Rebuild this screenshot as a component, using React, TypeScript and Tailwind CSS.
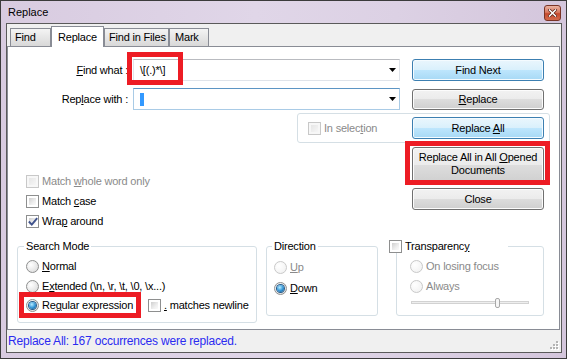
import React from "react";

const FONT = "font-['Liberation_Sans',Arial,sans-serif]";

function Check({ checked = false, disabled = false }: { checked?: boolean; disabled?: boolean }) {
  return (
    <span
      className={`relative flex w-[13px] h-[13px] shrink-0 items-center justify-center border p-[2px] ${
        disabled ? "border-[#c8c8c8] bg-[#f7f7f7]" : "border-[#8e8f8f] bg-white"
      }`}
    >
      <span
        className={`block w-full h-full ${
          disabled
            ? "bg-[linear-gradient(135deg,#e6e6e6,#f6f6f6)]"
            : "bg-[linear-gradient(135deg,#cfcfcf,#eeeeee_60%,#fbfbfb)]"
        }`}
      />
      {checked && (
        <svg className="absolute left-[1px] top-[1px]" width="10" height="10" viewBox="0 0 10 10">
          <path d="M1.5 5.2 L3.8 7.6 L8.6 1.8" fill="none" stroke="#3f528c" strokeWidth="1.9" strokeLinecap="square" />
        </svg>
      )}
    </span>
  );
}

function Radio({ checked = false, disabled = false }: { checked?: boolean; disabled?: boolean }) {
  return (
    <span
      className={`flex w-[13px] h-[13px] shrink-0 items-center justify-center rounded-full border ${
        disabled
          ? "border-[#c9c9c9] bg-[radial-gradient(circle_at_35%_35%,#ffffff,#efefef)]"
          : "border-[#8e8f8f] bg-[radial-gradient(circle_at_35%_35%,#ffffff,#d6d6d6)]"
      }`}
    >
      {checked && (
        <span className="block w-[7px] h-[7px] rounded-full bg-[radial-gradient(circle_at_40%_35%,#b8ecff,#2f93d6_55%,#0c4778)] shadow-[0_0_0_1px_#245a8a]" />
      )}
    </span>
  );
}

function Btn({
  children,
  blue = false,
  className = "",
}: {
  children: React.ReactNode;
  blue?: boolean;
  className?: string;
}) {
  return (
    <div
      className={`flex w-[132px] shrink-0 items-center justify-center rounded-[3px] border text-black ${
        blue
          ? "border-[#3c7fb1] bg-[linear-gradient(#eaf6fd,#d9f0fc_50%,#bee6fd_50%,#a7d9f5)] shadow-[inset_0_0_0_1px_#f4fbff]"
          : "border-[#707070] bg-[linear-gradient(#f2f2f2,#ebebeb_50%,#dddddd_50%,#cfcfcf)] shadow-[inset_0_0_0_1px_#fcfcfc]"
      } ${className}`}
    >
      {children}
    </div>
  );
}

function Combo({ children, focused = false }: { children?: React.ReactNode; focused?: boolean }) {
  return (
    <div
      className={`ml-[5px] flex h-[22px] w-[267px] items-center border bg-white ${
        focused
          ? "border-[#a9cbe6] border-t-[#5d95c4]"
          : "border-[#e0e4ea] border-t-[#b9bbc0]"
      }`}
    >
      <div className="flex flex-1 items-center pl-[6px]">{children}</div>
      <svg className="mr-[3px]" width="7" height="4" viewBox="0 0 7 4">
        <polygon points="0,0 7,0 3.5,4" fill="#000" />
      </svg>
    </div>
  );
}

const U = ({ children }: { children: React.ReactNode }) => <span className="underline underline-offset-[1px]">{children}</span>;

export default function App() {
  return (
    <div
      className={`relative h-[359px] w-[567px] overflow-hidden border border-[#3b3b3b] bg-[linear-gradient(90deg,#d8cbe0,#e0d6e8_45%,#dcd1e4_70%,#d4c6dc)] text-[11px] tracking-[-0.2px] text-black ${FONT}`}
    >
      {/* title bar */}
      <div className="flex h-[22px] items-center pl-[7px] pr-[5px]">
        <span className="text-[11px] tracking-normal text-black">Replace</span>
        <div className="ml-auto flex h-[16px] w-[17px] items-center justify-center self-start mt-[4px] rounded-[3px] border border-[#7a3426] bg-[linear-gradient(#eab3a2,#d9785f_45%,#c64a2e_55%,#d46a4c)]">
          <svg width="9" height="8" viewBox="0 0 9 8">
            <path d="M1.5 1 L7.5 7 M7.5 1 L1.5 7" stroke="#5a2016" strokeWidth="3" strokeLinecap="square" />
            <path d="M1.5 1 L7.5 7 M7.5 1 L1.5 7" stroke="#ffffff" strokeWidth="1.5" strokeLinecap="square" />
          </svg>
        </div>
      </div>

      {/* client area */}
      <div className="ml-[5px] flex h-[330px] w-[556px] flex-col border border-[#5a5a5a] bg-[#f0f0f0]">
        {/* tabs */}
        <div className="flex h-[22px] items-end whitespace-nowrap pl-[3px]">
          <div className="flex h-[18px] w-[41px] items-center border border-b-0 border-[#898c95] bg-[linear-gradient(#f4f4f4,#e6e6e6_50%,#d8d8d8)] pl-[4px]">
            Find
          </div>
          <div className="relative z-10 -mb-px flex h-[21px] w-[53px] items-center border border-b-0 border-[#898c95] bg-white pl-[6px]">
            Replace
          </div>
          <div className="flex h-[18px] w-[65px] items-center overflow-hidden border border-b-0 border-[#898c95] bg-[linear-gradient(#f4f4f4,#e6e6e6_50%,#d8d8d8)] pl-[4px]">
            Find in Files
          </div>
          <div className="flex h-[18px] w-[40px] items-center border border-b-0 border-[#898c95] bg-[linear-gradient(#f4f4f4,#e6e6e6_50%,#d8d8d8)] pl-[5px]">
            Mark
          </div>
        </div>

        {/* panel */}
        <div className="flex h-[284px] w-[553px] flex-col border border-[#898c95] bg-white">
          {/* Find what */}
          <div className="mt-[12px] flex h-[22px] items-center">
            <div className="w-[120px] text-right">
              <U>F</U>ind what :
            </div>
            <Combo>
              <span>{"\\[(.)*\\]"}</span>
            </Combo>
            <Btn blue className="ml-[12px] h-[22px]">
              Find Next
            </Btn>
          </div>

          {/* Replace with */}
          <div className="mt-[7px] flex h-[22px] items-center">
            <div className="w-[120px] text-right">
              Rep<U>l</U>ace with :
            </div>
            <Combo focused>
              <span className="block h-[13px] w-[4px] bg-[#3399ff]" />
            </Combo>
            <Btn className="ml-[12px] h-[21px] self-end">
              <span>
                <U>R</U>eplace
              </span>
            </Btn>
          </div>

          {/* In selection group */}
          <div className="ml-[289px] mt-[3px] flex h-[30px] w-[253px] items-center rounded-[3px] border border-[#d5dfe5] pl-[10px] pr-[5px]">
            <Check disabled />
            <span className="ml-[3px] text-[#8a8a8a]">
              In selec<U>t</U>ion
            </span>
            <Btn blue className="ml-auto h-[22px]">
              <span>
                Replace <U>A</U>ll
              </span>
            </Btn>
          </div>

          {/* options + buttons */}
          <div className="mt-[4px] flex">
            <div className="ml-[18px] mt-[24px] flex flex-col">
              <div className="flex h-[20px] items-center gap-[3px] text-[#8a8a8a]">
                <Check disabled />
                <span>
                  Match <U>w</U>hole word only
                </span>
              </div>
              <div className="flex h-[20px] items-center gap-[3px]">
                <Check />
                <span>
                  Match <U>c</U>ase
                </span>
              </div>
              <div className="flex h-[20px] items-center gap-[3px]">
                <Check checked />
                <span>
                  Wra<U>p</U> around
                </span>
              </div>
            </div>
            <div className="ml-auto mr-[15px] flex flex-col gap-[4px]">
              <Btn className="h-[37px] pb-[3px] text-center leading-[13px]">
                <span>
                  Replace All in All <U>O</U>pened
                  <br />
                  Documents
                </span>
              </Btn>
              <Btn className="h-[22px]">Close</Btn>
            </div>
          </div>

          {/* group boxes */}
          <div className="mt-[15px] flex items-start">
            {/* Search Mode */}
            <div className="relative ml-[9px] flex h-[77px] w-[240px] flex-col rounded-[3px] border border-[#d5dfe5] pl-[8px] pt-[9px]">
              <div className="absolute -top-[8px] left-[6px] bg-white px-[2px] leading-[14px]">Search Mode</div>
              <div className="flex h-[20px] items-center gap-[3px]">
                <Radio />
                <span>
                  <U>N</U>ormal
                </span>
              </div>
              <div className="flex h-[20px] items-center gap-[3px]">
                <Radio />
                <span>
                  E<U>x</U>tended (\n, \r, \t, \0, \x...)
                </span>
              </div>
              <div className="flex h-[19px] items-center">
                <div className="flex w-[122px] items-center gap-[3px]">
                  <Radio checked />
                  <span>
                    Re<U>g</U>ular expression
                  </span>
                </div>
                <div className="flex items-center gap-[3px]">
                  <Check />
                  <span>
                    <U>.</U> matches newline
                  </span>
                </div>
              </div>
            </div>

            {/* Direction */}
            <div className="relative ml-[9px] flex h-[70px] w-[112px] flex-col rounded-[3px] border border-[#d5dfe5] pl-[7px] pt-[10px]">
              <div className="absolute -top-[8px] left-[5px] bg-white px-[2px] leading-[14px]">Direction</div>
              <div className="flex h-[21px] items-center gap-[3px] text-[#8a8a8a]">
                <Radio disabled />
                <span>
                  <U>U</U>p
                </span>
              </div>
              <div className="flex h-[21px] items-center gap-[3px]">
                <Radio checked />
                <span>
                  <U>D</U>own
                </span>
              </div>
            </div>

            {/* Transparency */}
            <div className="relative ml-[18px] flex h-[70px] w-[148px] flex-col rounded-[3px] border border-[#d5dfe5] pl-[13px] pt-[9px]">
              <div className="absolute -left-[8px] -top-[8px] flex h-[14px] w-[119px] items-center gap-[3px] bg-white">
                <Check />
                <span>
                  Transparenc<U>y</U>
                </span>
              </div>
              <div className="flex h-[20px] items-center gap-[3px] text-[#8a8a8a]">
                <Radio disabled />
                <span>On losing focus</span>
              </div>
              <div className="flex h-[20px] items-center gap-[3px] text-[#8a8a8a]">
                <Radio disabled />
                <span>Always</span>
              </div>
              <div className="relative ml-[1px] mt-[1px] flex h-[11px] w-[118px] items-center">
                <div className="h-[3px] w-full border border-[#d2d2d2] bg-[#eeeeee]" />
                <div className="absolute left-[84px] top-[1px] h-[10px] w-[5px] rounded-[2px] border border-[#a8a8a8] bg-[#f6f6f6]" />
              </div>
            </div>
          </div>
        </div>

        {/* status bar */}
        <div className="flex h-[22px] items-center pl-[1px]">
          <span className="text-[12px] text-[#2b2bf0]">Replace All: 167 occurrences were replaced.</span>
          <svg className="ml-auto mr-[2px] mt-auto mb-[2px]" width="10" height="10" viewBox="0 0 10 10">
            {[
              [7, 1],
              [4, 4],
              [7, 4],
              [1, 7],
              [4, 7],
              [7, 7],
            ].map(([x, y], i) => (
              <g key={i}>
                <rect x={x + 1} y={y + 1} width="2" height="2" fill="#ffffff" />
                <rect x={x} y={y} width="2" height="2" fill="#b4b4b4" />
              </g>
            ))}
          </svg>
        </div>
      </div>

      {/* red annotation boxes */}
      <div className="pointer-events-none absolute left-[126px] top-[51px] h-[33px] w-[56px] border-[5px] border-[#ed1c24]" />
      <div className="pointer-events-none absolute left-[404px] top-[140px] h-[44px] w-[145px] border-[5px] border-[#ed1c24]" />
      <div className="pointer-events-none absolute left-[18px] top-[291px] h-[26px] w-[122px] border-[5px] border-[#ed1c24]" />
    </div>
  );
}
